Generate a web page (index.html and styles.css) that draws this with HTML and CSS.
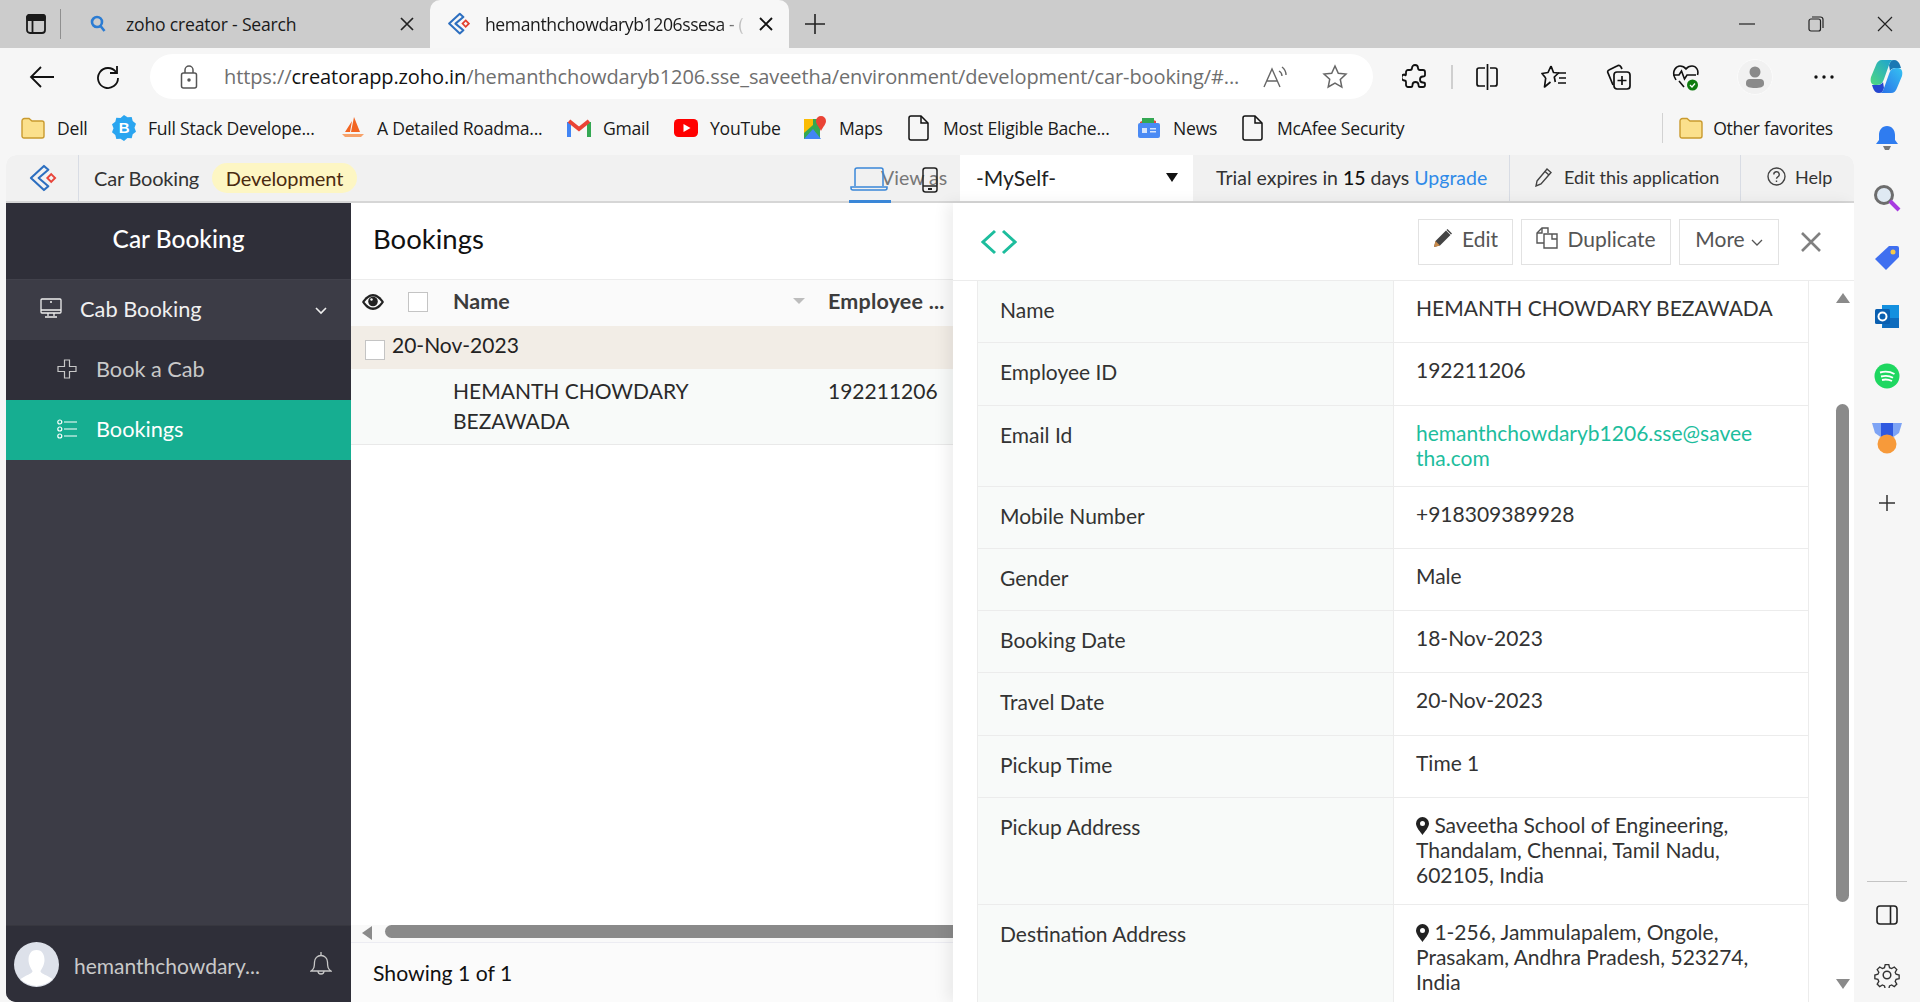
FILE: index.html
```html
<!DOCTYPE html>
<html lang="en">
<head>
    <meta charset="UTF-8">
    <meta name="viewport" content="width=device-width, initial-scale=1.0">
    <title>Car Booking - Zoho Creator</title>
    <link rel="stylesheet" href="styles.css">
</head>
<body>
    <!-- browser tab strip -->
    <div class="tabstrip">
        <svg class="tab-side" width="22" height="22" viewBox="0 0 22 22" fill="none" stroke="#1a1a1a" stroke-width="1.8"><rect x="2" y="2" width="18" height="18" rx="3"/><path d="M2 7h18M7.500 7v13" /><rect x="2" y="2" width="18" height="5" rx="2" fill="#1a1a1a"/></svg>
        <span class="tab-sep"></span>
        <div class="tab">
            <svg width="16" height="18" viewBox="0 0 16 18" fill="none" stroke="#2b7cd3" stroke-width="2.6"><circle cx="7" cy="7" r="5"/><path d="M10.500 11l4 5"/></svg>
            <span class="tab-title">zoho creator - Search</span>
            <svg class="tab-x" width="14" height="14" viewBox="0 0 14 14" stroke="#222" stroke-width="1.7"><path d="M1 1l12 12M13 1L1 13"/></svg>
        </div>
        <div class="tab tab-active">
            <svg width="22" height="24" viewBox="0 0 28 30" fill="none"><path d="M15 2L1.500 14.500 15 27l4.500-4-10-8.500 10-8.500z" stroke="#2d6fc0" stroke-width="2.600" stroke-linejoin="round"/><path d="M22.500 10.500l4 4-4 4-4-4z" stroke="#e2412e" stroke-width="2.200"/></svg>
            <span class="tab-title fade">hemanthchowdaryb1206ssesa - (</span>
            <svg class="tab-x" width="14" height="14" viewBox="0 0 14 14" stroke="#111" stroke-width="1.9"><path d="M1 1l12 12M13 1L1 13"/></svg>
        </div>
        <svg class="tab-plus" width="22" height="22" viewBox="0 0 22 22" stroke="#222" stroke-width="1.6"><path d="M11 1v20M1 11h20"/></svg>
        <div class="win-btns">
            <svg width="16" height="16" viewBox="0 0 16 16" stroke="#222" stroke-width="1.2"><path d="M0 8h16"/></svg>
            <svg width="16" height="16" viewBox="0 0 16 16" fill="none" stroke="#222" stroke-width="1.2"><rect x="1" y="3" width="11.500" height="12" rx="2"/><path d="M4 1h8.500a2.500 2.500 0 0 1 2.500 2.500V12"/></svg>
            <svg width="16" height="16" viewBox="0 0 16 16" stroke="#222" stroke-width="1.2"><path d="M1 1l14 14M15 1L1 15"/></svg>
        </div>
    </div>

    <!-- address bar row -->
    <div class="toolbar">
        <span class="tool tool-back"><svg width="26" height="24" viewBox="0 0 26 24" fill="none" stroke="#111" stroke-width="1.8"><path d="M25 12H2M12 2L2 12l10 10"/></svg></span>
        <span class="tool tool-reload"><svg width="26" height="26" viewBox="0 0 26 26" fill="none" stroke="#111" stroke-width="1.8"><path d="M21 8a10 10 0 1 0 2 6"/><path d="M22 2v7h-7"/></svg></span>
        <div class="addressbar">
            <svg class="lock" width="18" height="24" viewBox="0 0 18 24" fill="none" stroke="#555" stroke-width="1.500"><rect x="1.500" y="8" width="15" height="15" rx="2"/><path d="M5 8V5a4 4 0 0 1 8 0v3"/><circle cx="9" cy="15" r="1" fill="#555"/></svg>
            <span class="url"><span class="url-dim">https://</span>creatorapp.zoho.in<span class="url-dim">/hemanthchowdaryb1206.sse_saveetha/environment/development/car-booking/#...</span></span>
            <svg class="read" width="26" height="24" viewBox="0 0 26 24" fill="none" stroke="#666" stroke-width="1.400"><path d="M1 22L9 4l8 18M4 16h10"/><path d="M16 6a6 6 0 0 1 3 5M19 2a10 10 0 0 1 4 8"/></svg>
            <svg class="star" width="26" height="26" viewBox="0 0 26 26" fill="none" stroke="#666" stroke-width="1.500"><path d="M13 2l3.300 7.200 7.700.9-5.700 5.300 1.500 7.700L13 19.200 6.200 23l1.500-7.700L2 10.100l7.700-.9z"/></svg>
        </div>
        <span class="tool tool-puzzle"><svg width="26" height="26" viewBox="0 0 26 26" fill="none" stroke="#111" stroke-width="1.800" stroke-linejoin="round"><path d="M10 4a3 3 0 0 1 6 0c0 1 .5 2 2 2h3a2 2 0 0 1 2 2v3c0 1-1 1.500-2 1.500a3 3 0 0 0 0 6c1 0 2 .5 2 1.500v1a2 2 0 0 1-2 2h-3c-1 0-1.500-1-1.500-2a3 3 0 0 0-6 0c0 1-.5 2-1.500 2H6a2 2 0 0 1-2-2v-3c0-1-.5-1.500-1.500-1.500a3 3 0 0 1 0-6C3.500 12 4 11 4 10V8a2 2 0 0 1 2-2h2c1 0 2-1 2-2z"/></svg></span>
        <span class="tool-sep"></span>
        <span class="tool tool-split"><svg width="24" height="26" viewBox="0 0 24 26" fill="none" stroke="#111" stroke-width="1.700"><path d="M10 4H4a2 2 0 0 0-2 2v14a2 2 0 0 0 2 2h6M15 4h5a2 2 0 0 1 2 2v14a2 2 0 0 1-2 2h-5M12.500 0v26"/></svg></span>
        <span class="tool tool-fav"><svg width="26" height="26" viewBox="0 0 26 26" fill="none" stroke="#111" stroke-width="1.700" stroke-linejoin="round"><path d="M10 2l2.500 6.500 5 .5-4.200 4 1 5M4.700 14L1 9.500 7 8.500 10 2M4.700 14l-1.200 9 6-5"/><path d="M17 9h8M18 14h7M17 19h8"/></svg></span>
        <span class="tool tool-coll"><svg width="26" height="28" viewBox="0 0 26 28" fill="none" stroke="#111" stroke-width="1.700"><path d="M7 22L2 10a2 2 0 0 1 1-3l8-4a3 3 0 0 1 4 1l1 2"/><rect x="8" y="9" width="16" height="17" rx="3"/><path d="M16 13v9M11.500 17.500h9"/></svg></span>
        <span class="tool tool-heart"><svg width="28" height="28" viewBox="0 0 28 28" fill="none"><path d="M4 17L2.500 14C0 8 4 3 8 3c2.500 0 4.500 1 6 3 1.500-2 3.500-3 6-3 4 0 7 4 5.500 9M1 12h6l2.500-4 3 8 2.500-4h9M7 18l5 6" stroke="#111" stroke-width="1.600"/><circle cx="20.500" cy="22" r="5.500" fill="#107c10"/><path d="M18 22l2 2 3-3.500" stroke="#fff" stroke-width="1.300"/></svg></span>
        <span class="tool tool-profile"><span class="profile-ring"><svg width="22" height="24" viewBox="0 0 22 24" fill="#8a8a8a"><circle cx="11" cy="7" r="5.500"/><path d="M2 18a4 4 0 0 1 4-4h10a4 4 0 0 1 4 4v1c0 3-4 4-9 4s-9-1-9-4z"/></svg></span></span>
        <span class="tool tool-dots"><svg width="22" height="6" viewBox="0 0 22 6" fill="#111"><circle cx="3" cy="3" r="1.700"/><circle cx="11" cy="3" r="1.700"/><circle cx="19" cy="3" r="1.700"/></svg></span>
        <span class="tool tool-copilot"><svg width="34" height="36" viewBox="0 0 34 36" fill="none">
            <defs>
                <linearGradient id="cp-left" x1="0" y1="1" x2="1" y2="0"><stop offset="0" stop-color="#4fd97f"/><stop offset="1" stop-color="#1b9fd6"/></linearGradient>
                <linearGradient id="cp-right" x1="1" y1="0" x2="0" y2="1"><stop offset="0" stop-color="#35c2f2"/><stop offset="1" stop-color="#2a6fe8"/></linearGradient>
            </defs>
            <path d="M24 1c3 0 5 2 6 5l1 3h-5c-3 0-5 1-6 3l-1-6c1-3 2-5 5-5z" fill="#1a78b4"/>
            <path d="M9 34c-3 0-5-2-6-5l-1-3h5c3 0 5-1 6-3l1 6c-1 3-2 5-5 5z" fill="#2547d0"/>
            <path d="M12 1h12c-3 0-4 2-5 5l-5 14c-1 3-3 6-7 6H5c-4 0-5-4-4-8L6 6c1-3 3-5 6-5z" fill="url(#cp-left)"/>
            <path d="M21 34H9c3 0 4-2 5-5l5-14c1-3 3-6 7-6h2c4 0 5 4 4 8l-5 12c-1 3-3 5-6 5z" fill="url(#cp-right)"/>
        </svg></span>
    </div>

    <div class="lower">
        <div class="browser-page">
            <!-- favorites -->
            <div class="bookmarks">
                <div class="bm"><svg width="24" height="22" viewBox="0 0 24 22"><path d="M1 4a2.500 2.500 0 0 1 2.500-2.500H8L11 4h10a2 2 0 0 1 2 2v13a2 2 0 0 1-2 2H3a2 2 0 0 1-2-2z" fill="#fbe08c" stroke="#c99a2e" stroke-width="1.400"/></svg><span>Dell</span></div>
                <div class="bm"><svg width="24" height="26" viewBox="0 0 24 26"><path d="M12 0l3.500 2.300 4.200-.2 1 4 3.300 2.600-1.500 4 1.500 4-3.300 2.600-1 4-4.200-.2L12 26l-3.500-2.300-4.200.2-1-4L0 17.300l1.500-4-1.500-4 3.300-2.600 1-4 4.200.2z" fill="#2aa5f0"/><text x="12" y="18" text-anchor="middle" class="badge-b">B</text></svg><span>Full Stack Develope...</span></div>
                <div class="bm"><svg width="24" height="24" viewBox="0 0 24 24"><path d="M13 1l6 15h-9zM11 5l-2 11H4z" fill="#f26522"/><path d="M1 18h22l-3 3H4z" fill="#f7a26a"/></svg><span>A Detailed Roadma...</span></div>
                <div class="bm"><svg width="24" height="20" viewBox="0 0 24 20" fill="none"><path d="M2 19V4" stroke="#4285f4" stroke-width="4"/><path d="M22 19V4" stroke="#34a853" stroke-width="4"/><path d="M2 3l10 8 10-8" stroke="#ea4335" stroke-width="4"/></svg><span>Gmail</span></div>
                <div class="bm"><svg width="24" height="18" viewBox="0 0 24 18"><rect width="24" height="18" rx="4.500" fill="#f00"/><path d="M9.500 5v8l7-4z" fill="#fff"/></svg><span>YouTube</span></div>
                <div class="bm"><svg width="24" height="26" viewBox="0 0 24 26"><path d="M1 4h16v20H1z" fill="#34a853"/><path d="M1 24l9-10 8 10z" fill="#4285f4"/><path d="M1 4h9v6l-9 8z" fill="#fbbc04"/><path d="M18 1a5 5 0 0 1 5 5c0 3-3 6-5 10-2-4-5-7-5-10a5 5 0 0 1 5-5z" fill="#ea4335"/></svg><span>Maps</span></div>
                <div class="bm"><svg width="24" height="26" viewBox="0 0 24 26" fill="none" stroke="#111" stroke-width="1.500"><path d="M4 1h10l7 7v15a2 2 0 0 1-2 2H4a2 2 0 0 1-2-2V3a2 2 0 0 1 2-2z"/><path d="M14 1v7h7"/></svg><span>Most Eligible Bache...</span></div>
                <div class="bm"><svg width="24" height="24" viewBox="0 0 24 24"><path d="M3 6l8-4 8 3v4H3z" fill="#e8453c"/><path d="M5 2h12v6H5z" fill="#34a853"/><rect x="1" y="7" width="22" height="15" rx="2" fill="#4a8af4"/><path d="M5 12h5v5H5zM13 12h6v1.500h-6zM13 15h6v1.500h-6z" fill="#d6e4fb"/></svg><span>News</span></div>
                <div class="bm bm-last"><svg width="24" height="26" viewBox="0 0 24 26" fill="none" stroke="#111" stroke-width="1.500"><path d="M4 1h10l7 7v15a2 2 0 0 1-2 2H4a2 2 0 0 1-2-2V3a2 2 0 0 1 2-2z"/><path d="M14 1v7h7"/></svg><span>McAfee Security</span></div>
                <div class="bm-other"><svg width="24" height="22" viewBox="0 0 24 22"><path d="M1 4a2.500 2.500 0 0 1 2.500-2.500H8L11 4h10a2 2 0 0 1 2 2v13a2 2 0 0 1-2 2H3a2 2 0 0 1-2-2z" fill="#fbe08c" stroke="#c99a2e" stroke-width="1.400"/></svg><span>Other favorites</span></div>
            </div>

            <div class="app">
                <!-- creator top bar -->
                <div class="app-top">
                    <div class="app-logo"><svg width="28" height="28" viewBox="0 0 28 29" fill="none"><path d="M15 2L1.500 14.500 15 27l4.500-4-10-8.500 10-8.500z" stroke="#2d6fc0" stroke-width="2.200" stroke-linejoin="round"/><path d="M22.500 10.500l4 4-4 4-4-4z" stroke="#e8443a" stroke-width="2"/></svg></div>
                    <span class="app-name">Car Booking</span>
                    <span class="env-pill">Development</span>
                    <div class="view-as">
                        <span class="view-as-label">View as</span>
                        <svg class="ic-laptop" width="38" height="24" viewBox="0 0 38 24" fill="none" stroke="#3a87d8" stroke-width="1.500"><path d="M5 19V3a2 2 0 0 1 2-2h24a2 2 0 0 1 2 2v16"/><path d="M1 20h36v1a2 2 0 0 1-2 2H3a2 2 0 0 1-2-2z"/></svg>
                        <svg class="ic-phone" width="16" height="26" viewBox="0 0 16 26" fill="none" stroke="#222" stroke-width="1.500"><rect x="1" y="1" width="14" height="24" rx="2.500"/><path d="M1 19h14"/><path d="M6 22h4" stroke-width="2"/></svg>
                    </div>
                    <div class="user-select"><span>-MySelf-</span><span class="select-arrow"></span></div>
                    <span class="trial">Trial expires in <b>15</b> days <a class="upgrade">Upgrade</a></span>
                    <div class="top-link top-edit">
                        <svg width="18" height="20" viewBox="0 0 18 20" fill="none" stroke="#444" stroke-width="1.400"><path d="M2 14L12 2l4 3.500L6 17l-5 2z"/><path d="M10 4.500l4 3.500"/></svg>
                        <span>Edit this application</span>
                    </div>
                    <div class="top-link top-help">
                        <svg width="19" height="19" viewBox="0 0 19 19" fill="none" stroke="#444" stroke-width="1.400"><circle cx="9.500" cy="9.500" r="8.500"/><path d="M6.800 7.500a2.700 2.700 0 1 1 4 2.300c-1 .6-1.300 1-1.300 2"/><path d="M9.500 13.500v1.500"/></svg>
                        <span>Help</span>
                    </div>
                </div>

                <div class="app-main">
                    <!-- left nav -->
                    <aside class="sidebar">
                        <div class="side-head">Car Booking</div>
                        <div class="side-section">
                            <svg width="22" height="20" viewBox="0 0 22 20" fill="none" stroke="#eee" stroke-width="1.300"><rect x="1" y="1" width="20" height="14" rx="1"/><path d="M1 12h20M8 15v3M14 15v3M5 19h12"/><path d="M10 4h2" /></svg>
                            <span>Cab Booking</span>
                            <svg class="side-chev" width="12" height="8" viewBox="0 0 12 8" fill="none" stroke="#eee" stroke-width="1.600"><path d="M1 1l5 5 5-5"/></svg>
                        </div>
                        <div class="side-item">
                            <svg width="20" height="20" viewBox="0 0 20 20" fill="none" stroke="#c8c8c8" stroke-width="1.200"><path d="M7.500 1h5v6.500H19v5h-6.500V19h-5v-6.500H1v-5h6.500z"/></svg>
                            <span>Book a Cab</span>
                        </div>
                        <div class="side-item side-active">
                            <svg width="20" height="20" viewBox="0 0 20 20" fill="none" stroke="#fff" stroke-width="1.200"><circle cx="2.800" cy="3" r="2"/><circle cx="2.800" cy="10" r="2"/><circle cx="2.800" cy="17" r="2"/><path d="M7 3h13M7 10h13M7 17h13"/></svg>
                            <span>Bookings</span>
                        </div>
                        <div class="side-fill"></div>
                        <div class="side-foot">
                            <span class="avatar"><svg width="45" height="45" viewBox="0 0 45 45"><circle cx="22.500" cy="22.500" r="22.500" fill="#dde1ea"/><path d="M22.500 8c6 0 8 5 8 10s-3 9-4 11c0 2 3 3 7 5l5 3a22 22 0 0 1-32 0l5-3c4-2 7-3 7-5-1-2-4-6-4-11s2-10 8-10z" fill="#fff"/></svg></span>
                            <span class="user-name">hemanthchowdary...</span>
                            <svg class="side-bell" width="22" height="24" viewBox="0 0 22 24" fill="none" stroke="#c8c8c8" stroke-width="1.300"><path d="M1 19c3-2 3.500-4 3.500-9a6.500 6.500 0 0 1 13 0c0 5 .5 7 3.500 9z"/><path d="M8 19a3 3 0 0 0 6 0M11 0v3.500"/></svg>
                        </div>
                    </aside>

                    <!-- report list -->
                    <section class="list">
                        <h2 class="list-title">Bookings</h2>
                        <div class="list-row list-head">
                            <div class="cell-tools">
                                <svg width="22" height="16" viewBox="0 0 22 16"><path d="M0 8c3-5 7-8 11-8s8 3 11 8c-3 5-7 8-11 8S3 13 0 8z" fill="#222"/><path d="M2.500 8C5 4.500 8 2.500 11 2.500S17 4.500 19.500 8C17 11.500 14 13.500 11 13.500S5 11.500 2.500 8z" fill="#fafafa"/><circle cx="11" cy="7.500" r="4.800" fill="#222"/><circle cx="9.500" cy="5.500" r="1.200" fill="#fafafa"/></svg>
                                <span class="check check-head"></span>
                            </div>
                            <div class="cell-name"><span>Name</span><span class="sort-arrow"></span></div>
                            <div class="cell-emp">Employee ...</div>
                        </div>
                        <div class="list-group"><span class="check"></span><span>20-Nov-2023</span></div>
                        <div class="list-row list-data">
                            <div class="cell-tools"></div>
                            <div class="cell-name">HEMANTH CHOWDARY<br>BEZAWADA</div>
                            <div class="cell-emp">192211206</div>
                        </div>
                        <div class="list-fill"></div>
                        <div class="hscroll"><span class="hscroll-arrow"></span><span class="hscroll-thumb"></span></div>
                        <div class="list-foot">Showing 1 of 1</div>
                    </section>

                    <!-- record detail -->
                    <section class="detail">
                        <div class="detail-head">
                            <svg width="36" height="26" viewBox="0 0 36 26" fill="none" stroke="#1dbd9d" stroke-width="3"><path d="M14 2L2 13l12 11M22 2l12 11-12 11"/></svg>
                            <div class="detail-btns">
                                <span class="btn btn-edit"><svg width="20" height="20" viewBox="0 0 20 20"><path d="M1 19l1.500-6L13 2.500l4.500 4.500L7 17.500z" fill="#444"/><path d="M14.500 1l4.500 4.500-1 1L13.500 2z" fill="#444"/><path d="M1 19l1.500-6 4.500 4.500z" fill="#c98a4a"/></svg>Edit</span>
                                <span class="btn btn-dup"><svg width="22" height="22" viewBox="0 0 22 22" fill="none" stroke="#555" stroke-width="1.400"><path d="M8 16H1V6l5-5h6v5"/><path d="M6 1v5H1"/><path d="M8 7h8l5 0v14H8z"/><path d="M16 7v5h5"/></svg>Duplicate</span>
                                <span class="btn btn-more">More<svg width="12" height="8" viewBox="0 0 12 8" fill="none" stroke="#555" stroke-width="1.300"><path d="M1 1l5 5 5-5"/></svg></span>
                            </div>
                            <svg class="ic-close" width="20" height="20" viewBox="0 0 20 20" stroke="#808080" stroke-width="2.600"><path d="M1 1l18 18M19 1L1 19"/></svg>
                        </div>
                        <div class="detail-body">
                            <div class="fields">
                                <div class="field"><div class="f-label">Name</div><div class="f-value">HEMANTH CHOWDARY BEZAWADA</div></div>
                                <div class="field"><div class="f-label">Employee ID</div><div class="f-value">192211206</div></div>
                                <div class="field field-mail"><div class="f-label">Email Id</div><div class="f-value f-link">hemanthchowdaryb1206.sse@savee<br>tha.com</div></div>
                                <div class="field"><div class="f-label">Mobile Number</div><div class="f-value">+918309389928</div></div>
                                <div class="field"><div class="f-label">Gender</div><div class="f-value">Male</div></div>
                                <div class="field"><div class="f-label">Booking Date</div><div class="f-value">18-Nov-2023</div></div>
                                <div class="field"><div class="f-label">Travel Date</div><div class="f-value">20-Nov-2023</div></div>
                                <div class="field"><div class="f-label">Pickup Time</div><div class="f-value">Time 1</div></div>
                                <div class="field field-addr"><div class="f-label">Pickup Address</div><div class="f-value"><svg class="ic-pin" width="13" height="18" viewBox="0 0 13 18"><path fill-rule="evenodd" d="M6.500 0A6.500 6.500 0 0 1 13 6.500C13 10.500 8.500 15 6.500 18 4.500 15 0 10.500 0 6.500A6.500 6.500 0 0 1 6.500 0zm0 4a2.500 2.500 0 1 0 0 5 2.500 2.500 0 0 0 0-5z" fill="#222"/></svg> Saveetha School of Engineering,<br>Thandalam, Chennai, Tamil Nadu,<br>602105, India</div></div>
                                <div class="field field-addr"><div class="f-label">Destination Address</div><div class="f-value"><svg class="ic-pin" width="13" height="18" viewBox="0 0 13 18"><path fill-rule="evenodd" d="M6.500 0A6.500 6.500 0 0 1 13 6.500C13 10.500 8.500 15 6.500 18 4.500 15 0 10.500 0 6.500A6.500 6.500 0 0 1 6.500 0zm0 4a2.500 2.500 0 1 0 0 5 2.500 2.500 0 0 0 0-5z" fill="#222"/></svg> 1-256, Jammulapalem, Ongole,<br>Prasakam, Andhra Pradesh, 523274,<br>India</div></div>
                            </div>
                            <div class="vscroll">
                                <span class="vscroll-up"></span>
                                <span class="vscroll-thumb"></span>
                                <span class="vscroll-down"></span>
                            </div>
                        </div>
                    </section>
                </div>
            </div>
        </div>

        <!-- edge sidebar -->
        <div class="edge-bar">
            <div class="edge-top">
                <svg width="24" height="26" viewBox="0 0 24 26"><path d="M12 1c5 0 8 4 8 9v5l3 4H1l3-4v-5c0-5 3-9 8-9z" fill="#2f7cf0"/><path d="M8 21h8l-2 4h-4z" fill="#777"/></svg>
                <svg width="28" height="28" viewBox="0 0 28 28"><circle cx="11" cy="11" r="8.500" fill="#dfe9f3" stroke="#6d6d6d" stroke-width="3"/><path d="M17 17l9 9" stroke="#a83be0" stroke-width="4"/></svg>
                <svg width="26" height="26" viewBox="0 0 26 26"><path d="M15 1h8a2 2 0 0 1 2 2v9L12 25 1 14z" fill="#3f6ff0"/><circle cx="19" cy="7" r="2.500" fill="#f7c948"/></svg>
                <svg width="26" height="26" viewBox="0 0 26 26"><path d="M8 1h17v23H8z" fill="#1490df"/><path d="M10 14l15 0v10H8z" fill="#0f6cbd"/><rect x="1" y="5" width="15" height="15" rx="1.500" fill="#0a5fb0"/><circle cx="8.500" cy="12.500" r="4" fill="none" stroke="#fff" stroke-width="2"/></svg>
                <svg width="26" height="26" viewBox="0 0 26 26" fill="none"><circle cx="13" cy="13" r="12.500" fill="#1ed760"/><path d="M6 9.500c5-1.500 10-1 14.500 1.500M7 13.500c4-1 8.500-.8 12 1.200M8 17c3.300-.8 6.700-.5 10 1" stroke="#fff" stroke-width="1.900"/></svg>
                <svg width="30" height="32" viewBox="0 0 30 32"><path d="M0 1h30l-3 10-7 5H10L3 11z" fill="#7ea4f5"/><path d="M9 1h12v13l-3 4h-6l-3-4z" fill="#2f59e0"/><circle cx="15" cy="22" r="9.500" fill="#f79a3a"/></svg>
                <svg class="edge-plus" width="18" height="18" viewBox="0 0 18 18" stroke="#333" stroke-width="1.500"><path d="M9 1v16M1 9h16"/></svg>
            </div>
            <div class="edge-bottom">
                <span class="edge-rule"></span>
                <svg width="22" height="20" viewBox="0 0 22 20" fill="none" stroke="#222" stroke-width="1.600"><rect x="1" y="1" width="20" height="18" rx="3"/><path d="M14.500 1v18"/></svg>
                <svg width="26" height="26" viewBox="0 0 26 26" fill="none" stroke="#333" stroke-width="1.500"><circle cx="13" cy="13" r="3.800"/><path d="M11 1.500h4l.8 3.400 2.300 1 3-1.800 2.800 2.800-1.800 3 1 2.300 3.400.8v4l-3.400.8-1 2.300 1.800 3-2.800 2.800-3-1.800-2.300 1-.8 3.400h-4l-.8-3.400-2.300-1-3 1.800-2.800-2.800 1.800-3-1-2.300-3.400-.8v-4l3.400-.8 1-2.300-1.800-3 2.800-2.800 3 1.800 2.300-1z" transform="translate(1.300 1.300) scale(.9)"/></svg>
            </div>
        </div>
    </div>
</body>
</html>
```

FILE: styles.css
```css
* {
    box-sizing: border-box;
}
html, body {
    height: 100%;
}
body {
    margin: 0;
    width: 1920px;
    height: 1002px;
    overflow: hidden;
    background-color: #f6f6f6;
    font-family: "Open Sans", "Noto Sans", sans-serif;
    color: #1a1a1a;
}
svg {
    flex: none;
    display: block;
}

/* tab strip */
.tabstrip {
    height: 48px;
    background-color: #cccccc;
    display: flex;
    align-items: center;
}
.tab-side {
    margin-left: 25px;
}
.tab-sep {
    width: 1px;
    height: 30px;
    margin-left: 13px;
    background-color: #8f8f8f;
}
.tab {
    height: 48px;
    width: 369px;
    display: flex;
    align-items: center;
    font-size: 17.600px;
    letter-spacing: -0.2px;
}
.tab > svg:first-child {
    margin-left: 29px;
}
.tab-title {
    margin-left: 20px;
    white-space: nowrap;
}
.tab-x {
    margin-left: auto;
    margin-right: 16px;
}
.tab-active {
    width: 359px;
    background-color: #f7f7f7;
    border-radius: 10px 10px 0 0;
    letter-spacing: -0.42px;
}
.tab-active > svg:first-child {
    margin-left: 18px;
}
.tab-active .tab-title {
    margin-left: 15px;
    width: 262px;
}
.fade {
    -webkit-mask-image: linear-gradient(to right, #000 90%, transparent);
    mask-image: linear-gradient(to right, #000 90%, transparent);
}
.tab-plus {
    margin-left: 15px;
}
.win-btns {
    margin-left: auto;
    margin-right: 27px;
    display: flex;
    gap: 53px;
}

/* address row */
.toolbar {
    height: 60px;
    padding-bottom: 3px;
    display: flex;
    align-items: center;
}
.tool {
    width: 40px;
    height: 40px;
    display: flex;
    align-items: center;
    justify-content: center;
}
.tool-back {
    margin-left: 22px;
}
.tool-reload {
    margin-left: 26px;
}
.addressbar {
    width: 1223px;
    height: 45px;
    margin-left: 22px;
    padding-left: 30px;
    background-color: #fff;
    border-radius: 23px;
    display: flex;
    align-items: center;
}
.url {
    margin-left: 26px;
    width: 1020px;
    white-space: nowrap;
    font-size: 20px;
    letter-spacing: -0.1px;
    color: #111;
}
.url-dim {
    color: #6f6f6f;
}
.read {
    margin-left: 19px;
}
.star {
    margin-left: 33px;
}
.tool-puzzle {
    margin-left: 22px;
}
.tool-sep {
    width: 2px;
    height: 24px;
    margin-left: 16px;
    background-color: #cfcfcf;
}
.tool-split {
    margin-left: 14px;
}
.tool-fav {
    margin-left: 27px;
}
.tool-coll {
    margin-left: 25px;
}
.tool-heart {
    margin-left: 27px;
}
.tool-profile {
    margin-left: 29px;
}
.profile-ring {
    width: 36px;
    height: 36px;
    border-radius: 50%;
    background-color: #f1f1f1;
    border: 1px solid #fbfbfb;
    display: flex;
    align-items: center;
    justify-content: center;
}
.tool-dots {
    margin-left: 29px;
}
.tool-copilot {
    margin-left: 23px;
}

.lower {
    height: 894px;
    display: flex;
}
.browser-page {
    width: 1854px;
    display: flex;
    flex-direction: column;
}

/* favorites */
.bookmarks {
    height: 47px;
    padding-left: 21px;
    padding-bottom: 7px;
    display: flex;
    align-items: center;
    font-size: 17.600px;
    letter-spacing: -0.25px;
    white-space: nowrap;
}
.bm {
    display: flex;
    align-items: center;
    height: 30px;
}
.bm span {
    margin-left: 12px;
}
.bm:nth-child(1) { width: 91px; }
.bm:nth-child(2) { width: 229px; }
.bm:nth-child(3) { width: 226px; }
.bm:nth-child(4) { width: 107px; }
.bm:nth-child(5) { width: 129px; }
.bm:nth-child(6) { width: 104px; }
.bm:nth-child(7) { width: 230px; }
.bm:nth-child(8) { width: 104px; }
.bm-last { width: 200px; }
.bm-other {
    margin-left: auto;
    margin-right: 21px;
    padding-left: 16px;
    height: 30px;
    display: flex;
    align-items: center;
    border-left: 1px solid #d2d2d2;
}
.bm-other span {
    margin-left: 10px;
}
.badge-b {
    font-family: "Liberation Sans", sans-serif;
    font-weight: 700;
    font-size: 15px;
    fill: #fff;
}

/* creator frame */
.app {
    flex: 1;
    margin-left: 6px;
    min-height: 0;
    display: flex;
    flex-direction: column;
    background-color: #fff;
    border-radius: 10px 10px 0 10px;
    overflow: hidden;
    font-family: Lato, sans-serif;
}
.app-top {
    height: 48px;
    flex: none;
    padding-bottom: 1px;
    display: flex;
    align-items: center;
    background-color: #f1f1f1;
    border-bottom: 2px solid #d6d6d6;
    font-size: 19.500px;
    color: #333;
}
.app-logo {
    width: 73px;
    height: 46px;
    padding-left: 23px;
    display: flex;
    align-items: center;
    border-right: 1px solid #d8dce4;
}
.app-name {
    margin-left: 15px;
    font-size: 20px;
    letter-spacing: -0.2px;
}
.env-pill {
    margin-left: 13px;
    width: 145px;
    height: 30px;
    border-radius: 15px;
    background-color: #fdf6c3;
    color: #4a2a10;
    text-align: center;
    line-height: 30px;
    font-size: 20px;
    letter-spacing: -0.1px;
}
.view-as {
    position: relative;
    margin-left: 493px;
    width: 110px;
    height: 46px;
    color: #777;
    line-height: 46px;
}
.view-as-label {
    position: absolute;
    left: 31px;
    white-space: nowrap;
}
.ic-laptop {
    position: absolute;
    left: 0;
    top: 12px;
}
.view-as::after {
    content: "";
    position: absolute;
    left: -1px;
    bottom: -2px;
    width: 42px;
    height: 3px;
    background-color: #3a87d8;
}
.ic-phone {
    position: absolute;
    left: 72px;
    top: 12px;
}
.user-select {
    width: 233px;
    height: 46px;
    padding: 0 15px 0 16px;
    background-color: #fff;
    display: flex;
    align-items: center;
    justify-content: space-between;
    color: #222;
    font-size: 21px;
}
.select-arrow {
    width: 0;
    height: 0;
    border-left: 6px solid transparent;
    border-right: 6px solid transparent;
    border-top: 9px solid #111;
}
.trial {
    margin-left: 23px;
    width: 294px;
    height: 46px;
    line-height: 46px;
    white-space: nowrap;
    border-right: 1px solid #d8dce4;
}
.trial b {
    font-weight: 500;
    color: #111;
}
.upgrade {
    color: #2f8ae8;
}
.top-link {
    height: 46px;
    padding-bottom: 2px;
    display: flex;
    align-items: center;
    font-size: 18px;
}
.top-edit {
    width: 231px;
    padding-left: 25px;
    gap: 11px;
    border-right: 1px solid #d8dce4;
}
.top-help {
    padding-left: 26px;
    gap: 9px;
}

.app-main {
    flex: 1;
    min-height: 0;
    display: flex;
}

/* left nav */
.sidebar {
    width: 345px;
    flex: none;
    display: flex;
    flex-direction: column;
    background-color: #3c3c46;
}
.side-head {
    height: 76px;
    background-color: #2f2f39;
    color: #fff;
    text-align: center;
    line-height: 72px;
    font-size: 24.500px;
    font-weight: 500;
}
.side-section {
    height: 61px;
    padding-left: 34px;
    padding-bottom: 4px;
    display: flex;
    align-items: center;
    color: #f0f0f0;
    font-size: 21.800px;
    border-top: 1px solid #41414b;
}
.side-section span {
    margin-left: 18px;
}
.side-chev {
    margin-left: auto;
    margin-right: 24px;
    margin-top: 5px;
}
.side-item {
    height: 60px;
    padding-left: 51px;
    padding-bottom: 3px;
    display: flex;
    align-items: center;
    gap: 19px;
    background-color: #2f2f39;
    color: #c9c9c9;
    font-size: 21.700px;
}
.side-active {
    background-color: #16ae91;
    color: #fff;
}
.side-fill {
    flex: 1;
}
.side-foot {
    height: 77px;
    padding-left: 8px;
    display: flex;
    align-items: center;
    background-color: #2f2f39;
    border-top: 1px solid #37373f;
    color: #c9c9c9;
    font-size: 21px;
}
.avatar {
    width: 45px;
    height: 45px;
}
.user-name {
    margin-left: 15px;
    padding-top: 2px;
}
.side-bell {
    margin-left: auto;
    margin-right: 19px;
}

/* report list */
.list {
    width: 602px;
    flex: none;
    display: flex;
    flex-direction: column;
    overflow: hidden;
}
.list-title {
    margin: 0;
    height: 77px;
    padding-left: 22px;
    line-height: 71px;
    font-size: 27.500px;
    font-weight: 400;
    color: #111;
    border-bottom: 1px solid #ececec;
}
.list-row {
    display: flex;
}
.cell-tools {
    width: 102px;
    display: flex;
    align-items: center;
    padding-left: 11px;
}
.cell-name {
    width: 375px;
    padding-right: 23px;
}
.cell-emp {
    flex: 1;
    white-space: nowrap;
}
.list-head {
    height: 46px;
    background-color: #fafafa;
    align-items: center;
    font-size: 21.500px;
    font-weight: 700;
    color: #3c3c3c;
}
.list-head .cell-tools {
    margin-top: -2px;
}
.list-head .cell-name, .list-head .cell-emp {
    margin-top: -5px;
}
.list-head .cell-emp {
    letter-spacing: 0.2px;
}
.list-head .cell-name {
    display: flex;
    align-items: center;
    justify-content: space-between;
}
.sort-arrow {
    width: 0;
    height: 0;
    border-left: 6px solid transparent;
    border-right: 6px solid transparent;
    border-top: 6px solid #bdbdbd;
}
.check {
    display: block;
    width: 20px;
    height: 20px;
    flex: none;
    background-color: #fff;
    border: 1px solid #c4c4c4;
}
.check-head {
    margin-left: 24px;
}
.list-group {
    height: 43px;
    padding-left: 14px;
    display: flex;
    align-items: center;
    gap: 7px;
    background-color: #f2ede6;
    color: #222;
    font-size: 21px;
}
.list-group .check {
    margin-top: 4px;
}
.list-group span:last-child {
    margin-top: -6px;
}
.list-data {
    height: 76px;
    padding-top: 7px;
    background-color: #f8faf9;
    border-bottom: 1px solid #e9e9e9;
    font-size: 21px;
    line-height: 30px;
    color: #2a2a2a;
}
.list-fill {
    flex: 1;
}
.hscroll {
    height: 18px;
    padding-left: 11px;
    display: flex;
    background-color: #f9f9f9;
    border-bottom: 1px solid #ececf2;
}
.hscroll-arrow {
    margin-top: 1px;
    width: 0;
    height: 0;
    border-top: 7px solid transparent;
    border-bottom: 7px solid transparent;
    border-right: 10px solid #8a8a8a;
}
.hscroll-thumb {
    margin-left: 13px;
    flex: 1;
    height: 13px;
    background-color: #8a8a8a;
    border-radius: 7px 0 0 7px;
}
.list-foot {
    height: 59px;
    padding-left: 22px;
    line-height: 60px;
    background-color: #fbfbfb;
    font-size: 21.200px;
    color: #111;
}

/* record detail */
.detail {
    width: 901px;
    flex: none;
    display: flex;
    flex-direction: column;
    background-color: #fff;
    box-shadow: -6px 0 14px rgba(0, 0, 0, 0.07);
    position: relative;
}
.detail-head {
    height: 78px;
    flex: none;
    padding-left: 28px;
    display: flex;
    align-items: center;
    border-bottom: 1px solid #ececec;
}
.detail-btns {
    margin-left: auto;
    display: flex;
    gap: 8px;
}
.btn {
    height: 46px;
    padding-bottom: 7px;
    display: flex;
    align-items: center;
    justify-content: center;
    gap: 9px;
    border: 1px solid #e2e2e2;
    color: #555;
    font-size: 21px;
}
.btn-edit {
    width: 95px;
}
.btn-dup {
    width: 150px;
}
.btn-more {
    width: 100px;
    gap: 6px;
}
.btn-more svg {
    margin-top: 10px;
}
.ic-close {
    margin: 0 33px 0 22px;
}
.detail-body {
    flex: 1;
    min-height: 0;
    display: flex;
    overflow: hidden;
}
.fields {
    margin-left: 24px;
    width: 832px;
    flex: none;
}
.field {
    display: grid;
    grid-template-columns: 417px 415px;
    min-height: 62.300px;
    border-bottom: 1px solid #ececec;
    font-size: 21px;
    line-height: 25px;
    color: #333;
}
.field-mail {
    min-height: 81px;
}
.field-addr {
    min-height: 107px;
}
.f-label {
    padding: 16px 22px 0;
    background-color: #f8faf9;
    border-left: 1px solid #ececec;
    border-right: 1px solid #ececec;
}
.f-value {
    padding: 14px 22px 15px;
    border-right: 1px solid #ececec;
    white-space: nowrap;
}
.f-link {
    color: #1dbd9d;
}
.ic-pin {
    display: inline-block;
    vertical-align: -2px;
}
.vscroll {
    margin-left: 27px;
    width: 13px;
    padding-top: 12px;
    display: flex;
    flex-direction: column;
    align-items: center;
}
.vscroll-up {
    flex: none;
    width: 0;
    height: 0;
    border-left: 7px solid transparent;
    border-right: 7px solid transparent;
    border-bottom: 10px solid #8a8a8a;
}
.vscroll-thumb {
    flex: none;
    margin-top: 101px;
    width: 13px;
    height: 498px;
    background-color: #8a8a8a;
    border-radius: 7px;
}
.vscroll-down {
    flex: none;
    margin-top: 77px;
    width: 0;
    height: 0;
    border-left: 7px solid transparent;
    border-right: 7px solid transparent;
    border-top: 10px solid #8a8a8a;
}

/* edge sidebar */
.edge-bar {
    width: 66px;
    padding-bottom: 14px;
    display: flex;
    flex-direction: column;
    align-items: center;
    justify-content: space-between;
}
.edge-top {
    height: 420px;
    padding-top: 17px;
    display: flex;
    flex-direction: column;
    align-items: center;
}
.edge-top svg {
    margin-bottom: 33px;
}
.edge-top .edge-plus {
    margin-top: 7px;
}
.edge-bottom {
    display: flex;
    flex-direction: column;
    align-items: center;
}
.edge-rule {
    width: 40px;
    height: 1px;
    background-color: #c4c4c4;
    margin-bottom: 23px;
}
.edge-bottom svg:last-child {
    margin-top: 37px;
}
```
